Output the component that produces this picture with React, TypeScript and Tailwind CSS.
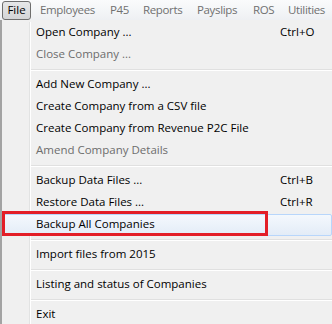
import React from 'react';

type Item =
  | { kind: 'item'; label: string; shortcut?: string; disabled?: boolean; active?: boolean }
  | { kind: 'sep' };

const items: Item[] = [
  { kind: 'item', label: 'Open Company ...', shortcut: 'Ctrl+O' },
  { kind: 'item', label: 'Close Company ...', disabled: true },
  { kind: 'sep' },
  { kind: 'item', label: 'Add New Company ...' },
  { kind: 'item', label: 'Create Company from a CSV file' },
  { kind: 'item', label: 'Create Company from Revenue P2C File' },
  { kind: 'item', label: 'Amend Company Details', disabled: true },
  { kind: 'sep' },
  { kind: 'item', label: 'Backup Data Files ...', shortcut: 'Ctrl+B' },
  { kind: 'item', label: 'Restore Data Files ...', shortcut: 'Ctrl+R' },
  { kind: 'item', label: 'Backup All Companies', active: true },
  { kind: 'sep' },
  { kind: 'item', label: 'Import files from 2015' },
  { kind: 'sep' },
  { kind: 'item', label: 'Listing and status of Companies' },
  { kind: 'sep' },
  { kind: 'item', label: 'Exit' },
];

// widths picked so each heading starts where it does in the old WinForms bar
const topMenus = [
  { label: 'Employees', w: 'w-[70px]' },
  { label: 'P45', w: 'w-[33px]' },
  { label: 'Reports', w: 'w-[54px]' },
  { label: 'Payslips', w: 'w-[56px]' },
  { label: 'ROS', w: 'w-[35px]' },
  { label: 'Utilities', w: 'w-[42px]' },
];

const Gutter = () => (
  <div className="w-[28px] shrink-0 self-stretch border-r border-[#e2e3e3] shadow-[1px_0_0_#ffffff]" />
);

const App: React.FC = () => {
  return (
    <div
      className="w-[332px] h-[324px] overflow-hidden bg-[#f0f0f0] text-[11.5px] text-[#000000]"
      style={{ fontFamily: '"Open Sans", "Liberation Sans", sans-serif' }}
    >
      {/* menu bar */}
      <div className="h-[20px] flex items-center bg-gradient-to-b from-[#fafbfc] to-[#eef0f3]">
        <div className="ml-[2px] h-[19px] w-[29px] shrink-0 flex items-center justify-center rounded-[3px] border border-[#6e6e6e] bg-gradient-to-b from-[#e6e7e8] to-[#d4d5d7] pb-[1px] text-[#000]">
          File
        </div>
        <div className="ml-[9px] flex tracking-[-0.35px]">
          {topMenus.map(m => (
            <div key={m.label} className={`${m.w} shrink-0 whitespace-nowrap pb-[1px] text-[#707070]`}>
              {m.label}
            </div>
          ))}
        </div>
      </div>

      {/* dropdown */}
      <div className="flex border-l-2 border-[#a3a3a3] pt-[2px]">
        <div className="flex-1 flex flex-col">
          {items.map((it, i) => {
            if (it.kind === 'sep') {
              return (
                <div key={i} className="h-[8px] flex">
                  <Gutter />
                  <div className="flex-1 flex flex-col justify-center pl-[1px]">
                    <div className="h-px bg-[#e0e0e0]" />
                    <div className="h-px bg-[#ffffff]" />
                  </div>
                </div>
              );
            }
            if (it.active) {
              return (
                <div key={i} className="relative h-[22px] flex">
                  <div className="ml-[1px] flex-1 flex items-center rounded-[2px] border border-[#b8d6fb] bg-gradient-to-b from-[#f4f8fd] to-[#e3ecf7] pl-[32px] pb-[2px]">
                    {it.label}
                  </div>
                  <div className="absolute left-0 top-[-3px] w-[266px] h-[25px] border-[3px] border-[#e31e27]" />
                </div>
              );
            }
            return (
              <div key={i} className="h-[22px] flex">
                <Gutter />
                <div
                  className={`flex-1 flex items-center justify-between pl-[6px] pb-[2px] ${
                    it.disabled ? 'text-[#6d6d6d]' : ''
                  }`}
                >
                  <span>{it.label}</span>
                  {it.shortcut && <span className="w-[52px]">{it.shortcut}</span>}
                </div>
              </div>
            );
          })}
        </div>
      </div>
    </div>
  );
};

export default App;
